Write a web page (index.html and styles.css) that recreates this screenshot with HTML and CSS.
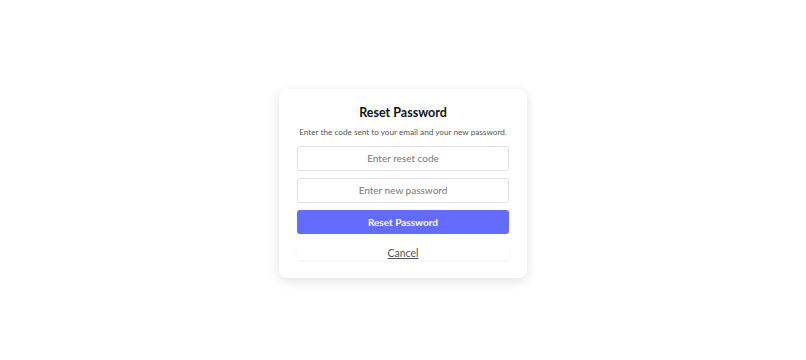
FILE: index.html
```html
<!DOCTYPE html>
<html>
<head>
<meta charset="utf-8">
<link rel="stylesheet" href="styles.css">
</head>
<body>
<div class="page">
  <div class="card">
    <h2 class="title">Reset Password</h2>
    <p class="subtitle">Enter the code sent to your email and your new password.</p>
    <input class="field" type="text" placeholder="Enter reset code">
    <input class="field" type="password" placeholder="Enter new password">
    <button class="primary">Reset Password</button>
    <button class="cancel">Cancel</button>
  </div>
</div>
</body>
</html>
```
FILE: styles.css
```css
html, body {
  margin: 0;
  padding: 0;
  background: #ffffff;
  font-family: "Lato", "Noto Sans", sans-serif;
}
.page {
  box-sizing: border-box;
  width: 806px;
  height: 360px;
  padding-top: 6px;
  display: flex;
  align-items: center;
  justify-content: center;
}
.card {
  width: 212px;
  padding: 15px 18px 18px;
  background: #fff;
  border-radius: 8px;
  box-shadow: 0 3px 12px rgba(0,0,0,0.12);
  display: flex;
  flex-direction: column;
  align-items: stretch;
}
.title {
  margin: 1px 0 0;
  font-size: 12.5px;
  font-weight: 700;
  color: #111;
  text-align: center;
  line-height: 16px;
}
.subtitle {
  margin: 5px 0 8px;
  font-size: 8.2px;
  color: #555;
  text-align: center;
  line-height: 12px;
  white-space: nowrap;
}
.field {
  box-sizing: border-box;
  height: 25px;
  margin: 0 0 7px;
  border: 1px solid #e0e0e0;
  border-radius: 3px;
  font-family: inherit;
  font-size: 10px;
  text-align: center;
  color: #333;
  outline: none;
}
.field::placeholder {
  color: #777;
}
.primary {
  height: 24px;
  margin: 0;
  border: none;
  border-radius: 3px;
  background: #646cff;
  color: #fff;
  font-family: inherit;
  font-size: 10px;
  font-weight: 700;
}
.cancel {
  height: 14px;
  margin: 12px 0 0;
  border: none;
  background: #fff;
  box-shadow: 0 1px 3px rgba(0,0,0,0.06);
  color: #555;
  font-family: inherit;
  font-size: 10.5px;
  text-decoration: underline;
  padding: 0;
}
```
